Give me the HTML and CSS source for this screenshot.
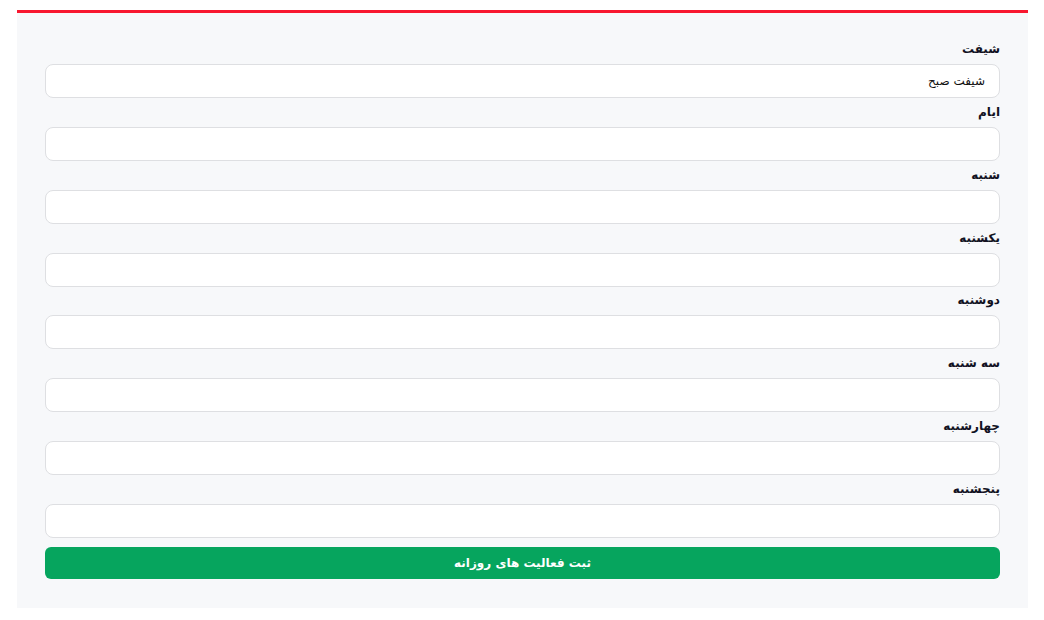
FILE: index.html
```html
<!DOCTYPE html>
<html lang="fa" dir="rtl">
<head>
    <meta charset="UTF-8">
    <meta name="viewport" content="width=device-width, initial-scale=1.0">
    <title>ثبت فعالیت های روزانه</title>
    <link rel="stylesheet" href="styles.css">
</head>
<body>
    <div class="panel">
        <form class="daily-form">
            <div class="field">
                <label for="shift">شیفت</label>
                <input id="shift" type="text" value="شیفت صبح">
            </div>
            <div class="field">
                <label for="days">ایام</label>
                <input id="days" type="text">
            </div>
            <div class="field">
                <label for="d1">شنبه</label>
                <input id="d1" type="text">
            </div>
            <div class="field">
                <label for="d2">یکشنبه</label>
                <input id="d2" type="text">
            </div>
            <div class="field">
                <label for="d3">دوشنبه</label>
                <input id="d3" type="text">
            </div>
            <div class="field">
                <label for="d4">سه شنبه</label>
                <input id="d4" type="text">
            </div>
            <div class="field">
                <label for="d5">چهارشنبه</label>
                <input id="d5" type="text">
            </div>
            <div class="field">
                <label for="d6">پنجشنبه</label>
                <input id="d6" type="text">
            </div>
            <button type="submit" class="submit-btn">ثبت فعالیت های روزانه</button>
        </form>
    </div>
</body>
</html>
```

FILE: styles.css
```css
body {
    margin: 0;
    padding: 10px 16px 0 17px;
    background: #ffffff;
    font-family: "DejaVu Sans", "Noto Sans", sans-serif;
    color: #111827;
}

.panel {
    background: #f7f8fa;
    border-top: 3px solid #f8172f;
    padding: 28px 28px 29px 28px;
}

.daily-form {
    display: flex;
    flex-direction: column;
    gap: 5.86px;
}

.field {
    display: flex;
    flex-direction: column;
}

.field label {
    font-size: 12px;
    font-weight: bold;
    line-height: 16px;
    margin-bottom: 7px;
    color: #111122;
}

.field input {
    height: 34px;
    box-sizing: border-box;
    border: 1px solid #dedfe2;
    border-radius: 8px;
    background: #ffffff;
    padding: 0 14px;
    font-family: inherit;
    font-size: 12px;
    color: #111111;
    outline: none;
}

.submit-btn {
    margin-top: 3px;
    height: 32px;
    border: none;
    border-radius: 6px;
    background: #06a55e;
    color: #ffffff;
    font-family: inherit;
    font-size: 12px;
    font-weight: bold;
    cursor: pointer;
}
```
